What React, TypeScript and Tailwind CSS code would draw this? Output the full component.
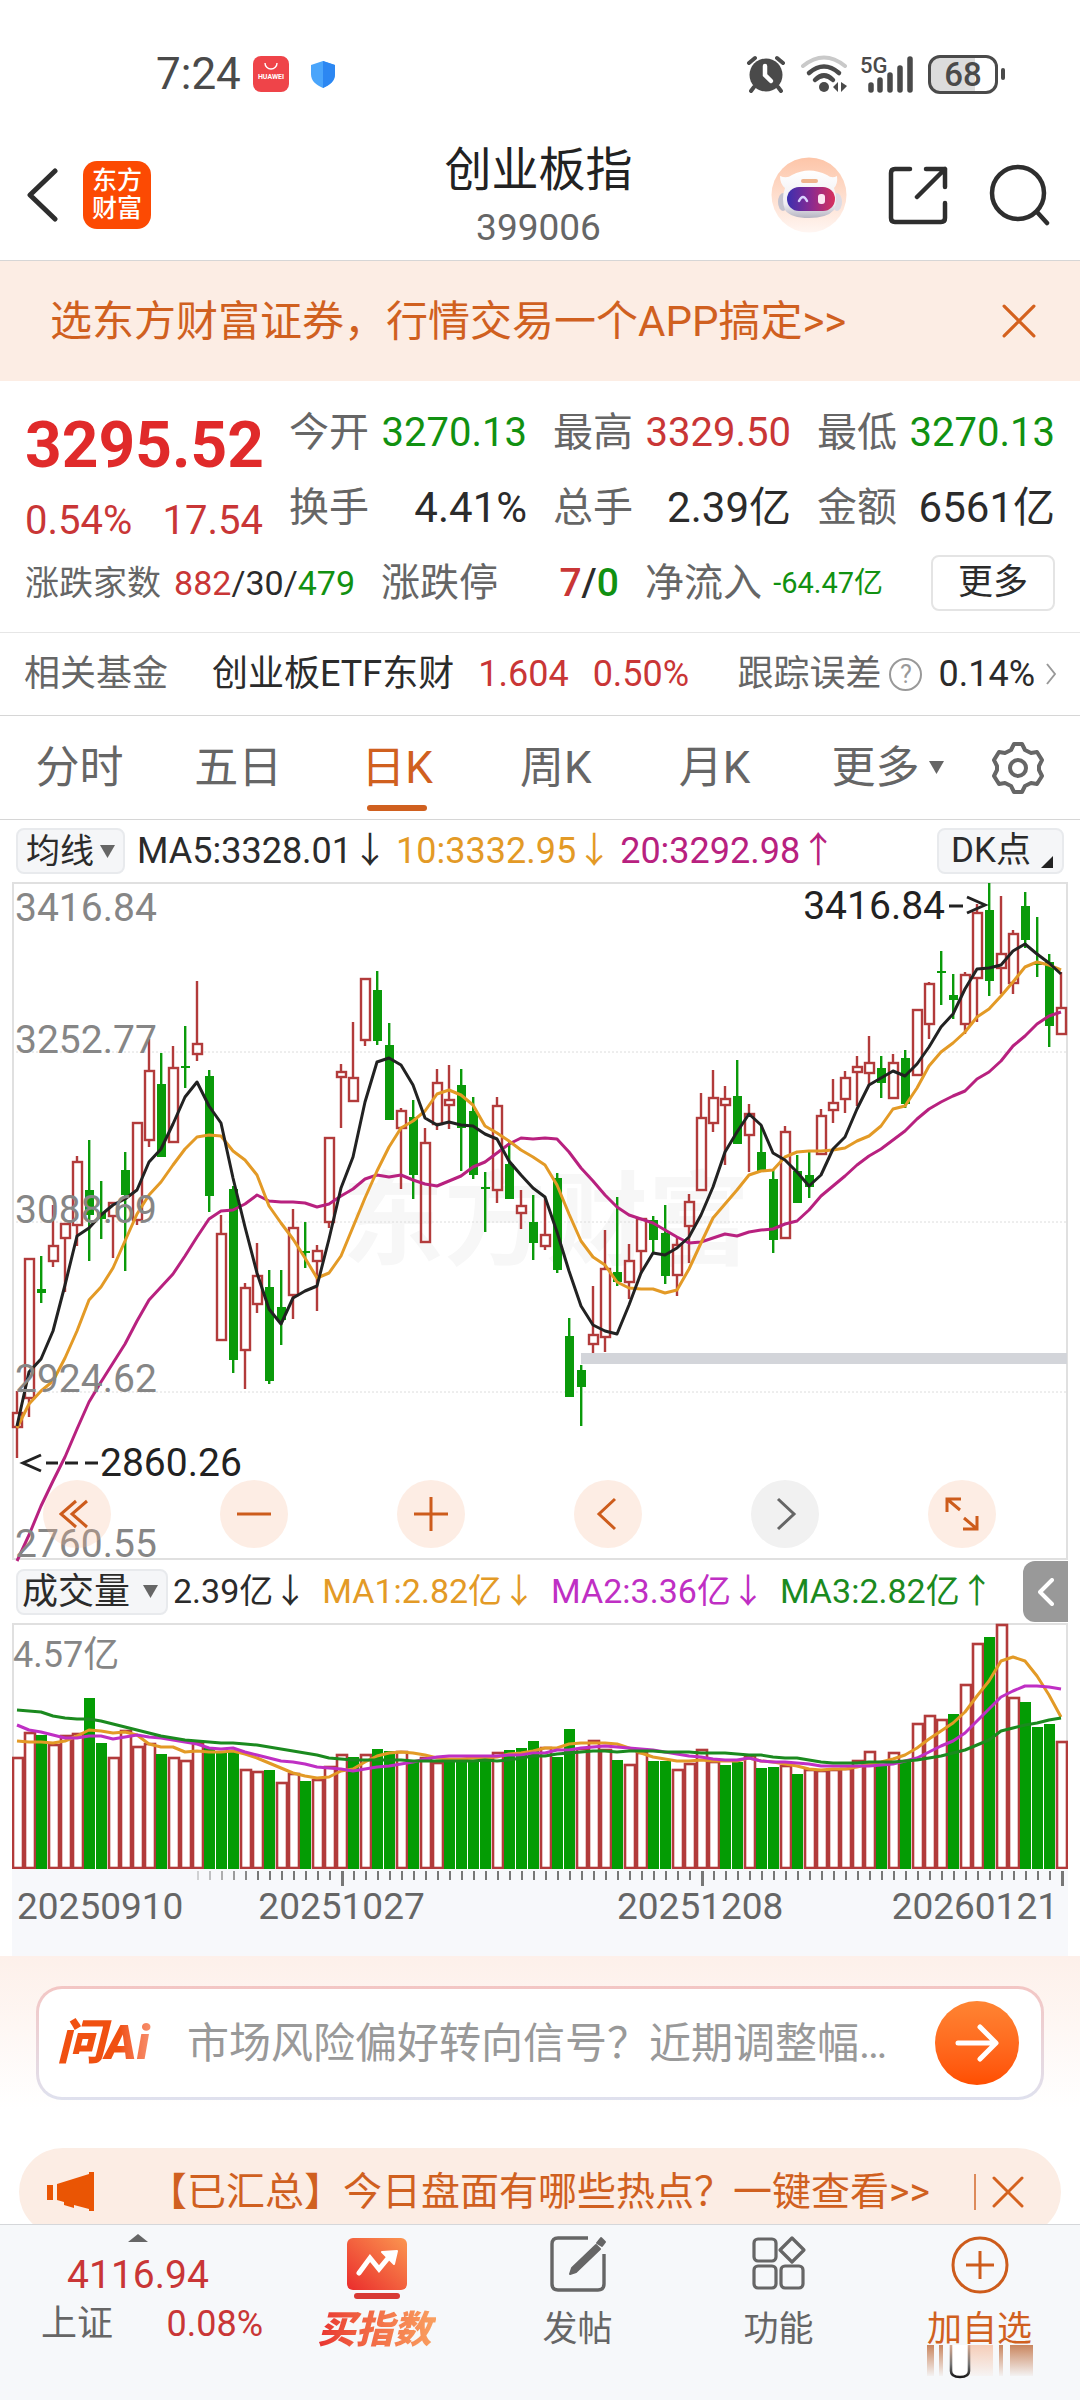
import React from "react";

const RED = "#b23b3b";
const GREEN = "#0a9a0a";

type Candle = ["r" | "g", number, number, number, number];

// direction, high, body top, body bottom, low
const candles: Candle[] = [
  ["r", 509, 530, 546, 576], ["r", 376, 376, 517, 535], ["g", 374, 407, 411, 421], ["r", 323, 363, 380, 385],
  ["r", 341, 341, 357, 410], ["r", 274, 279, 344, 364], ["g", 258, 308, 333, 379], ["g", 299, 330, 337, 357],
  ["r", 320, 320, 335, 376], ["g", 270, 288, 313, 389], ["r", 240, 240, 339, 343], ["r", 157, 188, 259, 265],
  ["g", 171, 202, 275, 275], ["r", 164, 185, 261, 261], ["g", 144, 184, 186, 206], ["r", 99, 161, 173, 179],
  ["g", 188, 194, 314, 330], ["r", 333, 351, 459, 459], ["g", 304, 307, 478, 491], ["r", 401, 405, 469, 507],
  ["r", 361, 393, 423, 431], ["g", 388, 405, 499, 502], ["g", 388, 425, 438, 463], ["r", 327, 345, 414, 437],
  ["g", 340, 369, 371, 386], ["r", 363, 368, 380, 429], ["r", 255, 255, 341, 346], ["r", 182, 189, 196, 246],
  ["r", 140, 195, 220, 220], ["r", 96, 96, 159, 164], ["g", 89, 108, 159, 163], ["g", 141, 163, 238, 238],
  ["r", 226, 228, 247, 307], ["g", 218, 235, 293, 317], ["r", 246, 260, 361, 361], ["r", 187, 200, 243, 248],
  ["r", 183, 217, 224, 247], ["g", 187, 203, 246, 289], ["g", 215, 229, 293, 297], ["g", 290, 305, 307, 350],
  ["r", 215, 223, 309, 321], ["g", 260, 282, 317, 317], ["r", 308, 323, 332, 347], ["g", 313, 340, 361, 378],
  ["r", 316, 352, 365, 368], ["g", 291, 296, 388, 391], ["g", 436, 454, 515, 515], ["g", 483, 488, 505, 544],
  ["r", 404, 452, 463, 471], ["r", 348, 386, 456, 470], ["g", 315, 390, 400, 404], ["r", 362, 378, 401, 417],
  ["r", 336, 336, 370, 392], ["g", 334, 338, 358, 371], ["g", 323, 351, 394, 402], ["r", 355, 362, 394, 414],
  ["r", 312, 319, 345, 381], ["r", 211, 235, 309, 309], ["r", 188, 215, 242, 250], ["r", 204, 216, 224, 283],
  ["g", 178, 214, 262, 262], ["r", 222, 231, 254, 290], ["g", 243, 270, 290, 290], ["g", 287, 297, 358, 371],
  ["r", 244, 249, 357, 357], ["g", 273, 289, 321, 321], ["g", 270, 293, 305, 316], ["r", 227, 233, 273, 273],
  ["r", 197, 220, 229, 241], ["r", 189, 195, 218, 231], ["r", 174, 184, 191, 224], ["r", 154, 180, 192, 204],
  ["g", 174, 186, 201, 216], ["r", 172, 180, 217, 217], ["g", 168, 176, 222, 226], ["r", 127, 127, 194, 194],
  ["r", 100, 101, 143, 157], ["g", 69, 89, 91, 123], ["g", 92, 113, 118, 137], ["r", 90, 92, 143, 152],
  ["r", 22, 30, 97, 140], ["g", 1, 28, 99, 114], ["r", 14, 71, 87, 112], ["r", 48, 51, 102, 112],
  ["g", 10, 24, 58, 66], ["g", 35, 80, 83, 95], ["g", 72, 80, 144, 165], ["r", 90, 125, 153, 153],
];

const ma5 = [
  544, 490, 477, 449, 403, 354, 346, 333, 323, 317, 308, 280, 267, 242, 215, 200, 224, 241, 296, 345, 391, 427,
  442, 416, 409, 404, 357, 306, 275, 220, 180, 176, 183, 203, 236, 243, 240, 243, 244, 252, 257, 279, 293, 306,
  315, 350, 389, 424, 443, 449, 452, 423, 391, 371, 373, 366, 355, 333, 305, 270, 250, 232, 243, 271, 278, 290,
  304, 293, 267, 255, 227, 203, 196, 189, 194, 182, 165, 145, 132, 107, 87, 86, 83, 69, 62, 72, 81, 92,
];
const ma10 = [
  546, 522, 509, 499, 476, 449, 418, 405, 386, 359, 332, 313, 300, 283, 267, 255, 253, 254, 269, 278, 293, 324,
  341, 357, 376, 396, 391, 374, 345, 316, 289, 265, 246, 239, 229, 212, 208, 213, 223, 244, 251, 259, 268, 275,
  283, 303, 332, 359, 375, 383, 400, 406, 407, 407, 411, 408, 387, 361, 336, 322, 308, 293, 289, 288, 275, 270,
  269, 269, 268, 266, 259, 254, 244, 227, 224, 206, 184, 170, 161, 150, 135, 127, 114, 100, 85, 80, 83, 88,
];
const ma20 = [
  679, 653, 624, 599, 575, 547, 520, 500, 481, 462, 439, 418, 405, 392, 374, 355, 337, 329, 328, 322, 313, 319,
  320, 320, 321, 325, 322, 314, 307, 297, 293, 295, 293, 298, 302, 304, 299, 294, 285, 280, 271, 262, 256, 257,
  256, 257, 270, 286, 299, 313, 325, 333, 337, 341, 348, 355, 361, 360, 356, 352, 354, 350, 348, 347, 342, 339,
  328, 314, 304, 294, 283, 274, 267, 258, 249, 237, 227, 220, 214, 209, 197, 190, 179, 164, 154, 142, 134, 130,
];

const volumes: [("r" | "g"), number][] = [
  ["r", 134], ["r", 109], ["g", 112], ["r", 121], ["r", 112], ["r", 110], ["g", 75], ["g", 120], ["r", 134],
  ["r", 107], ["r", 123], ["r", 120], ["g", 131], ["r", 134], ["r", 137], ["r", 119], ["g", 125], ["g", 128],
  ["g", 129], ["r", 146], ["r", 148], ["g", 147], ["r", 159], ["r", 150], ["g", 158], ["r", 156], ["r", 143],
  ["r", 131], ["g", 134], ["r", 131], ["g", 126], ["g", 128], ["r", 128], ["g", 138], ["r", 134], ["r", 139],
  ["g", 137], ["g", 137], ["g", 137], ["g", 136], ["r", 129], ["g", 127], ["g", 125], ["g", 118], ["r", 124],
  ["g", 134], ["g", 106], ["r", 125], ["r", 117], ["r", 126], ["g", 137], ["r", 141], ["r", 129], ["g", 138],
  ["g", 138], ["r", 146], ["r", 140], ["r", 126], ["r", 138], ["g", 142], ["g", 139], ["r", 132], ["g", 145],
  ["g", 144], ["r", 142], ["g", 151], ["r", 146], ["r", 147], ["r", 146], ["r", 145], ["r", 137], ["r", 128],
  ["g", 141], ["r", 129], ["g", 137], ["r", 100], ["r", 92], ["r", 96], ["g", 91], ["r", 61], ["r", 20],
  ["g", 14], ["r", 1], ["r", 74], ["g", 79], ["g", 104], ["g", 101], ["r", 118],
];

const vol1 = [
  577, 579, 578, 583, 577, 560, 542, 546, 553, 548, 558, 585, 593, 594, 610, 607, 609, 608, 606, 616, 627, 642,
  658, 672, 682, 687, 683, 667, 660, 638, 620, 611, 608, 612, 617, 626, 629, 629, 628, 626, 624, 616, 612, 607,
  597, 598, 586, 583, 581, 583, 585, 598, 611, 624, 631, 635, 636, 634, 636, 637, 637, 627, 636, 640, 645, 652,
  660, 662, 661, 660, 654, 646, 638, 630, 618, 598, 570, 545, 522, 488, 440, 395, 337, 323, 335, 382, 437, 504,
];
const vol2 = [
  528, 543, 550, 558, 567, 568, 561, 562, 569, 563, 558, 563, 567, 573, 578, 584, 596, 600, 598, 609, 617, 627,
  635, 640, 645, 653, 657, 660, 665, 661, 655, 650, 645, 638, 631, 624, 621, 620, 620, 620, 620, 619, 617, 612,
  611, 604, 603, 597, 593, 591, 593, 597, 599, 603, 608, 614, 620, 624, 631, 634, 634, 628, 635, 638, 639, 641,
  645, 650, 652, 652, 652, 650, 647, 645, 635, 628, 608, 592, 577, 552, 515, 480, 443, 426, 411, 411, 413, 419,
];
const vol3 = [
  482, 486, 489, 500, 507, 510, 511, 515, 526, 533, 542, 552, 560, 567, 574, 577, 579, 581, 583, 585, 589, 594,
  600, 606, 612, 619, 627, 631, 632, 632, 632, 632, 634, 635, 635, 635, 635, 635, 635, 634, 637, 632, 627, 622,
  620, 616, 611, 608, 606, 607, 608, 607, 607, 607, 608, 610, 610, 611, 611, 613, 615, 617, 619, 623, 626, 628,
  632, 638, 641, 642, 641, 640, 640, 640, 637, 632, 627, 622, 612, 602, 588, 572, 547, 537, 528, 522, 514, 507,
];

const cx = (i: number) => 5 + i * 12;
const line = (ys: number[]) => ys.map((y, i) => `${cx(i)},${y}`).join(" ");
const volLine = (vs: number[]) => vs.map((v, i) => `${cx(i)},${Math.round(v / 3 - 74)}`).join(" ");

function PriceChart() {
  return (
    <svg viewBox="0 0 1056 678" className="block h-auto w-full overflow-visible" role="img" aria-label="日K线图">
      <text x="330" y="375" fontSize="102" fontWeight="700" fill="#f7f7f7">东方财富</text>
      {[170, 340, 510].map((y) => (
        <line key={y} x1="0" x2="1056" y1={y} y2={y} stroke="#dcdcdc" strokeDasharray="2 2" />
      ))}
      <rect x="1" y="1" width="1054" height="676" fill="none" stroke="#e0e0e0" strokeWidth="2" />
      <rect x="569" y="471" width="486" height="11" fill="#d3d5da" />
      {candles.map(([dir, high, top, bottom, low], i) => {
        const c = dir === "r" ? RED : GREEN;
        return dir === "r" ? (
          <g key={i} stroke={c} strokeWidth="2.4" fill="none">
            <path d={`M${cx(i)} ${high}V${top}M${cx(i)} ${bottom}V${low}`} />
            <rect x={cx(i) - 4} y={top + 1} width="9" height={Math.max(bottom - top - 2, 4)} />
          </g>
        ) : (
          <g key={i} fill={c}>
            <rect x={cx(i) - 1} y={high} width="2.4" height={low - high} />
            <rect x={cx(i) - 4} y={top} width="9" height={bottom - top} />
          </g>
        );
      })}
      <g fill="none" strokeWidth="3" strokeLinejoin="round">
        <polyline points={line(ma20)} stroke="#b8217f" />
        <polyline points={line(ma10)} stroke="#e39a26" />
        <polyline points={line(ma5)} stroke="#222" />
      </g>
      <g fontSize="39" fill="#868686">
        <text x="3" y="39">3416.84</text>
        <text x="3" y="171">3252.77</text>
        <text x="3" y="341">3088.69</text>
        <text x="3" y="510">2924.62</text>
        <text x="3" y="675">2760.55</text>
      </g>
      <g fontSize="39" fill="#222">
        <text x="88" y="594">2860.26</text>
        <text x="933" y="37" textAnchor="end">3416.84</text>
      </g>
      <path d="M29 573l-18 8l18 8M34 581h12M53 581h13M73 581h13" fill="none" stroke="#222" strokeWidth="3" />
      <path d="M937 24h14M955 15l18 8l-18 8" fill="none" stroke="#222" strokeWidth="3" />
    </svg>
  );
}

function VolumeChart() {
  return (
    <svg viewBox="0 0 1056 246" className="block h-auto w-full" role="img" aria-label="成交量图">
      <path d="M1 246V1H1055V246" fill="none" stroke="#e0e0e0" strokeWidth="2" />
      <text x="1" y="44" fontSize="36" fill="#868686">4.57亿</text>
      {volumes.map(([dir, top], i) =>
        dir === "r" ? (
          <rect key={i} x={cx(i) - 4} y={top + 1} width="10" height={244 - top} fill="#fff" stroke={RED} strokeWidth="2.6" />
        ) : (
          <rect key={i} x={cx(i) - 5} y={top} width="11" height={246 - top} fill="#049c04" />
        ),
      )}
      <g fill="none" strokeWidth="3" strokeLinejoin="round">
        <polyline points={volLine(vol1)} stroke="#e39a26" />
        <polyline points={volLine(vol2)} stroke="#bf2fc4" />
        <polyline points={volLine(vol3)} stroke="#1b8a1f" />
      </g>
    </svg>
  );
}

function Ticks() {
  const minor = Array.from({ length: 73 }, (_, k) => k + 15);
  return (
    <svg viewBox="0 0 1056 18" className="block h-auto w-full" aria-hidden="true">
      {minor.map((i) => {
        const major = i === 27 || i === 57 || i === 87;
        const opacity = i < 20 ? 0.3 + (i - 15) * 0.14 : 1;
        return <rect key={i} x={cx(i)} y="2" width={major ? 3 : 2} height={major ? 15 : 9} fill="#777" opacity={opacity} />;
      })}
    </svg>
  );
}

function Stat({ label, value, tone }: { label: string; value: string; tone: string }) {
  return (
    <div className="flex items-center justify-between whitespace-nowrap text-[40px] leading-[56px]">
      <span className="text-[#666]">{label}</span>
      <span className={tone}>{value}</span>
    </div>
  );
}

function Close({ size }: { size: number }) {
  return (
    <svg width={size} height={size} viewBox="0 0 32 32" fill="none" stroke="#d4611e" strokeWidth="3" strokeLinecap="round" aria-hidden="true">
      <path d="M2 2L30 30M30 2L2 30" />
    </svg>
  );
}

function StatusBar() {
  return (
    <div className="flex h-[140px] items-center justify-between pr-[75px] pl-[156px] pt-[8px] text-[#4a4a4a]">
      <div className="flex items-center">
        <span className="text-[44px]">7:24</span>
        <svg width="36" height="36" viewBox="0 0 36 36" className="ml-[12px]" aria-label="HUAWEI">
          <rect width="36" height="36" rx="8" fill="#ef4449" />
          <path d="M12 7a6 6 0 0 0 12 0" fill="none" stroke="#fff" strokeWidth="1.4" />
          <text x="18" y="23" textAnchor="middle" fontSize="7" fontWeight="700" fill="#fff">HUAWEI</text>
        </svg>
        <svg width="26" height="28" viewBox="0 0 26 28" className="ml-[21px]" aria-hidden="true">
          <path d="M13 1L25 5V14C25 21 20 25 13 28C6 25 1 21 1 14V5Z" fill="#4aa5fb" />
          <path d="M13 1L25 5V14C25 21 20 25 13 28Z" fill="#2c87f2" />
        </svg>
      </div>
      <div className="flex items-center">
        <svg width="40" height="40" viewBox="0 0 40 40" fill="none" stroke="#4a4a4a" strokeLinecap="round" aria-hidden="true">
          <circle cx="20" cy="21" r="16.5" fill="#4a4a4a" stroke="none" />
          <path d="M3 9L9 4M37 9L31 4M8 33L5 37M32 33L35 37" strokeWidth="4" />
          <path d="M19 12V21L25 27" stroke="#fff" strokeWidth="4.5" />
        </svg>
        <svg width="48" height="38" viewBox="0 0 48 38" className="ml-[14px]" fill="none" strokeLinecap="round" aria-hidden="true">
          <path d="M3 11Q24 -6 45 11" stroke="#c9c9c9" strokeWidth="4" />
          <path d="M9 18Q24 5 39 18M15 25Q24 16 33 25" stroke="#4a4a4a" strokeWidth="4.5" />
          <circle cx="24" cy="32" r="5" fill="#4a4a4a" />
          <path d="M38 27V37L33 32ZM41 27L47 31L41 37Z" fill="#4a4a4a" />
        </svg>
        <svg width="54" height="38" viewBox="0 0 54 38" className="ml-[12px] overflow-visible" aria-hidden="true">
          <text x="0" y="18" fontSize="22" fontWeight="500" fill="#4a4a4a">5G</text>
          <path d="M11 30V35M20 25V35M30 20V35M40 13V35M50 4V35" stroke="#4a4a4a" strokeWidth="5.5" strokeLinecap="round" />
        </svg>
        <div className="ml-[14px] flex h-[39px] w-[70px] items-center justify-center rounded-[12px] border-[3px] border-[#4a4a4a] bg-linear-to-r from-[#dcdcdc] from-68% to-white to-68% text-[33px] leading-none font-medium">
          68
        </div>
        <div className="ml-[3px] h-[12px] w-[4px] rounded-full bg-[#4a4a4a]" />
      </div>
    </div>
  );
}

function Header() {
  return (
    <header className="grid h-[121px] grid-cols-[1fr_auto_1fr] items-start border-b border-[#d6d6d6] pr-[29px] pl-[26px]">
      <div className="flex h-[109px] items-center gap-[24px]">
        <button type="button" aria-label="返回">
          <svg width="33" height="54" viewBox="0 0 33 54" fill="none" stroke="#2e2e2e" strokeWidth="5" strokeLinecap="round" strokeLinejoin="round">
            <path d="M29 3L4 27L29 51" />
          </svg>
        </button>
        <a href="#home" className="flex size-[68px] items-center justify-center rounded-[14px] bg-[#fc4a03] text-center text-[25px] leading-[28px] font-medium text-white">
          东方<br />财富
        </a>
      </div>
      <div className="flex flex-col items-center pt-px">
        <h1 className="text-[47px] leading-[58px] text-[#222]">创业板指</h1>
        <p className="text-[37px] leading-[58px] text-[#666]">399006</p>
      </div>
      <div className="flex h-[109px] items-center justify-end gap-[41px]">
        <button type="button" aria-label="智能助手">
          <svg width="76" height="76" viewBox="0 0 76 76">
            <defs>
              <linearGradient id="halo" x1="0" y1="0" x2="0" y2="1">
                <stop offset="0" stopColor="#fdc5a8" />
                <stop offset="1" stopColor="#fff6f2" />
              </linearGradient>
              <linearGradient id="visor" x1="0" y1="0" x2="1" y2="0">
                <stop offset="0" stopColor="#3a2fb0" />
                <stop offset="0.5" stopColor="#8a2a90" />
                <stop offset="1" stopColor="#d8305c" />
              </linearGradient>
              <linearGradient id="shell" x1="0" y1="0" x2="0" y2="1">
                <stop offset="0" stopColor="#ffffff" />
                <stop offset="0.7" stopColor="#f0eef2" />
                <stop offset="1" stopColor="#b5b4c2" />
              </linearGradient>
            </defs>
            <circle cx="38" cy="38" r="37.5" fill="url(#halo)" />
            <ellipse cx="12" cy="45" rx="5" ry="9" fill="#c3c2ce" />
            <ellipse cx="66" cy="45" rx="5" ry="9" fill="#dddbe4" />
            <path d="M9 19Q16 22 21 18Q38 9 56 18Q61 22 66 19Q67 27 63 31Q67 42 63 53Q56 61 38 61Q20 61 14 53Q10 42 14 31Q9 27 9 19Z" fill="url(#shell)" />
            <rect x="30" y="22" width="17" height="4" rx="2" fill="#efb58d" />
            <rect x="16" y="30" width="48" height="24" rx="12" fill="url(#visor)" />
            <path d="M28 44Q32 36 36 44" fill="none" stroke="#d9d2ff" strokeWidth="2.5" strokeLinecap="round" />
            <rect x="47" y="37" width="7" height="10" rx="3" fill="#fde6f2" />
          </svg>
        </button>
        <button type="button" aria-label="分享">
          <svg width="60" height="60" viewBox="0 0 60 60" fill="none" stroke="#2e2e2e" strokeWidth="4.5" strokeLinecap="round" strokeLinejoin="round">
            <path d="M22 4H7Q3 4 3 8V53Q3 57 7 57H53Q57 57 57 53V38M38 4H57V22M57 4L29 32" />
          </svg>
        </button>
        <button type="button" aria-label="搜索">
          <svg width="62" height="62" viewBox="0 0 62 62" fill="none" stroke="#2e2e2e" strokeWidth="4.5" strokeLinecap="round">
            <circle cx="29" cy="29" r="26" />
            <path d="M48 48L58 59" />
          </svg>
        </button>
      </div>
    </header>
  );
}

function ToolButton({ label, muted, children }: { label: string; muted?: boolean; children: React.ReactNode }) {
  return (
    <button
      type="button"
      aria-label={label}
      className={`flex size-[68px] items-center justify-center rounded-full ${muted ? "bg-[#f1f1f1]" : "bg-[#f9b993]/25"}`}
    >
      <svg width="36" height="36" viewBox="0 0 36 36" fill="none" stroke={muted ? "#666" : "#cd5c1c"} strokeWidth="3">
        {children}
      </svg>
    </button>
  );
}

function Triangle() {
  return (
    <svg width="15" height="13" viewBox="0 0 15 13" aria-hidden="true">
      <path d="M0 0H15L7.5 13Z" fill="#666" />
    </svg>
  );
}

function NavItem({ label, tone, children, extra }: { label: string; tone: string; children: React.ReactNode; extra?: React.ReactNode }) {
  return (
    <button type="button" className="relative flex flex-1 flex-col items-center">
      <svg width="64" height="64" viewBox="0 0 64 64" fill="none" strokeLinejoin="round" className="overflow-visible">
        {children}
      </svg>
      <span className={`mt-[8px] text-[35px] leading-[48px] ${tone}`}>{label}</span>
      {extra}
    </button>
  );
}

export default function App() {
  return (
    <div className="bg-white font-[Roboto,'Noto_Sans_CJK_SC',sans-serif] text-[#2b2b2b]">
      <StatusBar />
      <Header />

      <div className="flex h-[120px] items-center justify-between bg-[#fcede4] pr-[44px] pl-[50px] text-[42px] text-[#d0601f]">
        <a href="#open">选东方财富证券，行情交易一个APP搞定&gt;&gt;</a>
        <button type="button" aria-label="关闭"><Close size={34} /></button>
      </div>

      <section className="border-b border-[#e6e6e6] px-[25px] pt-[24px] pb-[21px]">
        <div className="grid grid-cols-4 gap-x-[26px]">
          <div className="whitespace-nowrap">
            <p className="text-[64px] leading-[82px] font-bold text-[#e02a2a]">3295.52</p>
            <p className="flex justify-between text-[40px] leading-[68px] text-[#c93636]">
              <span>0.54%</span>
              <span>17.54</span>
            </p>
          </div>
          <div className="flex flex-col gap-[19px]">
            <Stat label="今开" value="3270.13" tone="text-[#119111]" />
            <Stat label="换手" value="4.41%" tone="text-[42px] text-[#2b2b2b]" />
          </div>
          <div className="flex flex-col gap-[19px]">
            <Stat label="最高" value="3329.50" tone="text-[#c93636]" />
            <Stat label="总手" value="2.39亿" tone="text-[42px] text-[#2b2b2b]" />
          </div>
          <div className="flex flex-col gap-[19px]">
            <Stat label="最低" value="3270.13" tone="text-[#119111]" />
            <Stat label="金额" value="6561亿" tone="text-[42px] text-[#2b2b2b]" />
          </div>
        </div>
        <div className="flex items-center gap-[26px] leading-[54px] whitespace-nowrap">
          <div className="flex w-[330px] items-center justify-between text-[34px]">
            <span className="text-[#666]">涨跌家数</span>
            <span><span className="text-[#c93636]">882</span>/30/<span className="text-[#119111]">479</span></span>
          </div>
          <div className="flex w-[238px] items-center justify-between text-[39px]">
            <span className="text-[#666]">涨跌停</span>
            <span className="font-medium"><span className="text-[#c93636]">7</span>/<span className="text-[#119111]">0</span></span>
          </div>
          <div className="flex w-[238px] items-center justify-between">
            <span className="text-[39px] text-[#666]">净流入</span>
            <span className="text-[29px] text-[#119111]">-64.47亿</span>
          </div>
          <button type="button" className="ml-auto h-[56px] w-[124px] rounded-[8px] border-2 border-[#e4e4e4] text-[35px] leading-[48px]">更多</button>
        </div>
      </section>

      <section className="flex h-[83px] items-center border-b border-[#d6d6d6] px-[24px] text-[36px] whitespace-nowrap">
        <span className="text-[#666]">相关基金</span>
        <a href="#etf" className="ml-[44px]">创业板ETF东财</a>
        <span className="ml-[24px] text-[#c93636]">1.604</span>
        <span className="ml-[24px] text-[#c93636]">0.50%</span>
        <span className="ml-auto text-[#666]">跟踪误差</span>
        <span className="ml-[8px] flex size-[33px] items-center justify-center rounded-full border-2 border-[#999] text-[25px] leading-none text-[#999]">?</span>
        <span className="ml-[16px]">0.14%</span>
        <svg width="10" height="22" viewBox="0 0 10 22" className="ml-[11px]" fill="none" stroke="#999" strokeWidth="2" aria-hidden="true">
          <path d="M1 1L9 11L1 21" />
        </svg>
      </section>

      <nav className="flex h-[104px] border-b border-[#d6d6d6] text-[44px] text-[#666]" aria-label="周期">
        <button type="button" className="flex-1">分时</button>
        <button type="button" className="flex-1">五日</button>
        <button type="button" className="relative flex-1 text-[#d0601f]">
          日K
          <span className="absolute bottom-[8px] left-1/2 h-[6px] w-[60px] -translate-x-1/2 rounded-full bg-[#d0601f]" />
        </button>
        <button type="button" className="flex-1">周K</button>
        <button type="button" className="flex-1">月K</button>
        <button type="button" className="flex w-[188px] items-center justify-center gap-[10px]">更多<Triangle /></button>
        <button type="button" className="mr-[26px] flex w-[72px] items-center justify-center" aria-label="设置">
          <svg width="54" height="54" viewBox="0 0 54 54" fill="none" stroke="#666" strokeWidth="4" strokeLinejoin="round">
            <path d="M23 3H31L34 9L40 12L46 11L51 19L48 25V29L51 35L46 43L40 42L34 45L31 51H23L20 45L14 42L8 43L3 35L6 29V25L3 19L8 11L14 12L20 9Z" />
            <circle cx="27" cy="27" r="8" />
          </svg>
        </button>
      </nav>

      <section className="px-[12px]">
        <div className="flex h-[62px] items-center pl-[4px] text-[36px] whitespace-nowrap">
          <button type="button" className="flex h-[46px] w-[109px] items-center justify-center gap-[6px] rounded-[8px] border-2 border-[#e8eaed] bg-[#f5f6f8] text-[34px]">均线<Triangle /></button>
          <span className="ml-[12px]">MA5:3328.01↓</span>
          <span className="ml-[8px] text-[#e39a26]">10:3332.95↓</span>
          <span className="ml-[8px] text-[#b8217f]">20:3292.98↑</span>
          <button type="button" className="mr-[4px] ml-auto flex h-[46px] w-[127px] items-center gap-[10px] rounded-[8px] border-2 border-[#e8eaed] bg-[#f5f6f8] pl-[12px] text-[35px]">
            DK点
            <svg width="12" height="12" viewBox="0 0 12 12" className="mt-[22px]" aria-hidden="true"><path d="M12 0V12H0Z" fill="#222" /></svg>
          </button>
        </div>
        <div className="relative">
          <PriceChart />
          <div className="absolute inset-x-0 bottom-[12px] flex justify-between pr-[72px] pl-[31px]">
            <ToolButton label="最早"><path d="M17 5L2 18L17 31M28 5L13 18L28 31" /></ToolButton>
            <ToolButton label="缩小"><path d="M1 18H35" /></ToolButton>
            <ToolButton label="放大"><path d="M1 18H35M18 1V35" /></ToolButton>
            <ToolButton label="向左"><path d="M25 3L9 18L25 33" /></ToolButton>
            <ToolButton label="向右" muted><path d="M11 3L27 18L11 33" /></ToolButton>
            <ToolButton label="全屏"><path d="M3 16V3H17M3 3L16 14M33 20V33H19M33 33L20 22" /></ToolButton>
          </div>
        </div>
        <div className="flex h-[63px] items-center pl-[4px] text-[34px] whitespace-nowrap">
          <button type="button" className="flex h-[46px] w-[152px] items-center justify-between rounded-[8px] border-2 border-[#e8eaed] bg-[#f5f6f8] pr-[8px] pl-[4px] text-[36px]">成交量<Triangle /></button>
          <span className="ml-[5px]">2.39亿↓</span>
          <span className="ml-[15px] text-[#e39a26]">MA1:2.82亿↓</span>
          <span className="ml-[15px] text-[#bf2fc4]">MA2:3.36亿↓</span>
          <span className="ml-[15px] text-[#1b8a1f]">MA3:2.82亿↑</span>
          <button type="button" aria-label="展开" className="ml-auto flex h-[61px] w-[45px] items-center justify-center rounded-l-[12px] bg-[#999]">
            <svg width="16" height="28" viewBox="0 0 16 28" fill="none" stroke="#fff" strokeWidth="4" strokeLinecap="round" strokeLinejoin="round"><path d="M14 2L2 14L14 26" /></svg>
          </button>
        </div>
        <VolumeChart />
        <div className="h-[87px] bg-[#f7f8fb]">
          <Ticks />
          <div className="flex pr-[10px] pl-[5px] text-[37px] leading-[40px] text-[#666]">
            <span>20250910</span>
            <span className="ml-[75px]">20251027</span>
            <span className="mx-auto pl-[84px]">20251208</span>
            <span>20260121</span>
          </div>
        </div>
      </section>

      <section className="bg-linear-to-b from-[#fdf0ea] to-white to-80% px-[36px] pt-[30px] pb-[48px]">
        <div className="rounded-[26px] bg-linear-to-b from-[#f3c6c4] to-[#dfe1ee] p-[3px]">
          <form className="flex h-[108px] items-center rounded-[23px] bg-white pr-[22px] pl-[18px]">
            <label htmlFor="ask" className="w-[104px] bg-linear-to-r from-[#f05010] from-60% to-[#f8a080] bg-clip-text text-[48px] leading-[60px] font-black text-transparent italic">
              问Ai
            </label>
            <input id="ask" type="text" placeholder="市场风险偏好转向信号？近期调整幅…" className="ml-[26px] min-w-0 flex-1 text-[42px] outline-none placeholder:text-[#999]" />
            <button type="button" aria-label="发送" className="flex size-[84px] items-center justify-center rounded-full bg-linear-to-b from-[#ff8432] to-[#ff4e00]">
              <svg width="44" height="38" viewBox="0 0 44 38" fill="none" stroke="#fff" strokeWidth="5" strokeLinecap="round" strokeLinejoin="round"><path d="M3 19H40M25 3L41 19L25 35" /></svg>
            </button>
          </form>
        </div>
      </section>

      <section className="mx-[19px] h-[76px] overflow-hidden">
        <div className="flex h-[88px] items-center rounded-[44px] bg-[#fcede4] pr-[37px] pl-[28px] text-[39px] whitespace-nowrap text-[#d0601f]">
          <svg width="48" height="40" viewBox="0 0 48 40" fill="#ea5504" aria-hidden="true">
            <path d="M0 13H6V28H0ZM10 12L42 2V0H47V39H42V37L27 33V36L17 33V30L10 28Z" />
          </svg>
          <a href="#hot" className="ml-[53px]">【已汇总】今日盘面有哪些热点？一键查看&gt;&gt;</a>
          <span className="ml-auto h-[36px] w-[2px] bg-[#d0601f]/70" />
          <button type="button" aria-label="关闭提示" className="ml-[16px]"><Close size={32} /></button>
        </div>
      </section>

      <footer className="flex h-[176px] border-t border-[#d5d7da] bg-[#f6f8fa] pt-[9px]">
        <button type="button" className="flex w-[276px] flex-col items-center">
          <svg width="20" height="8" viewBox="0 0 20 8" aria-hidden="true"><path d="M0 8L10 0L20 8Z" fill="#666" /></svg>
          <span className="mt-[8px] text-[39px] leading-[50px] text-[#c93636]">4116.94</span>
          <span className="flex w-full justify-between pr-[13px] pl-[41px] text-[36px] leading-[48px]">
            <span className="text-[#666]">上证</span>
            <span className="text-[#c93636]">0.08%</span>
          </span>
        </button>
        <NavItem label="买指数" tone="bg-linear-to-r from-[#e83030] to-[#f9a060] bg-clip-text font-black italic text-[38px] pr-[4px] text-transparent">
          <defs>
            <linearGradient id="buy" x1="0" y1="1" x2="1" y2="0">
              <stop offset="0" stopColor="#ea2c2c" />
              <stop offset="1" stopColor="#fb9650" />
            </linearGradient>
          </defs>
          <rect x="2" y="4" width="60" height="52" rx="6" fill="url(#buy)" />
          <rect x="9" y="59" width="46" height="6" rx="3" fill="#d83a34" />
          <path d="M14 39L25 24L34 35L44 23" stroke="#fff" strokeWidth="5" strokeLinecap="round" strokeLinejoin="miter" />
          <path d="M37 18L52 17L49 30Z" fill="#fff" stroke="#fff" strokeWidth="2" />
        </NavItem>
        <NavItem label="发帖" tone="text-[#666]">
          <g stroke="#666" strokeWidth="3.4">
            <path d="M42 4H12Q6 4 6 10V50Q6 56 12 56H52Q58 56 58 50V20" />
          </g>
          <path d="M55 4L59 8L56 12L51 9ZM50 11L54 15L30 38L24 40L26 34Z" fill="#666" stroke="#666" strokeWidth="2" />
        </NavItem>
        <NavItem label="功能" tone="text-[#666]">
          <g stroke="#666" strokeWidth="3.2">
            <rect x="7" y="5" width="22" height="22" rx="4" />
            <rect x="7" y="32" width="22" height="22" rx="4" />
            <rect x="34" y="32" width="22" height="22" rx="4" />
            <path d="M45 4L57 16L45 28L33 16Z" />
          </g>
        </NavItem>
        <NavItem
          label="加自选"
          tone="text-[#d0601f]"
          extra={
            <svg width="106" height="34" viewBox="0 0 106 34" className="absolute top-[111px]" aria-hidden="true">
              <defs>
                <linearGradient id="fade" x1="0" y1="0" x2="0" y2="1">
                  <stop offset="0" stopColor="#c9855e" />
                  <stop offset="1" stopColor="#c9855e" stopOpacity="0.05" />
                </linearGradient>
                <linearGradient id="pale" x1="0" y1="0" x2="0" y2="1">
                  <stop offset="0" stopColor="#f5cdb8" />
                  <stop offset="1" stopColor="#f5cdb8" stopOpacity="0.1" />
                </linearGradient>
                <linearGradient id="dark" x1="0" y1="0" x2="0" y2="1">
                  <stop offset="0" stopColor="#d9a88e" />
                  <stop offset="0.6" stopColor="#777" />
                  <stop offset="1" stopColor="#1a1a1a" />
                </linearGradient>
              </defs>
              <path d="M0 0H7V31H0ZM12 0H16V31H12ZM72 0H76V31H72ZM83 0H106V31H83Z" fill="url(#fade)" />
              <rect x="43" y="0" width="23" height="31" fill="url(#pale)" />
              <path d="M24 0V26Q24 32 33 32Q42 32 42 26V0" fill="#fff" stroke="url(#dark)" strokeWidth="2.6" />
            </svg>
          }
        >
          <g stroke="#cd5c1c" strokeWidth="3">
            <circle cx="32" cy="31" r="27" />
            <path d="M18 31H46M32 17V45" />
          </g>
        </NavItem>
      </footer>
    </div>
  );
}
